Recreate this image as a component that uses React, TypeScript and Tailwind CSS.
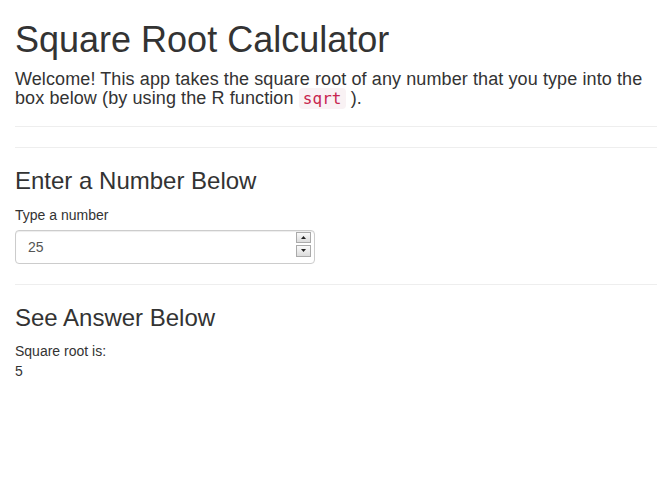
export default function App() {
  return (
    <div className="min-h-[480px] bg-white text-[#333] text-[14px] leading-[20px] font-['Liberation_Sans',Arial,sans-serif]">
      <div className="px-[15px]">
        <h1 className="pt-[20px] pb-[10px] text-[36px] leading-[39.6px] font-normal">Square Root Calculator</h1>
        <h4 className="pb-[17px] text-[18px] leading-[19.8px] font-normal tracking-[0.1px]">
          Welcome! This app takes the square root of any number that you type into the box below (by using the R function{' '}
          <code className="rounded-[4px] bg-[#f9f2f4] px-[4px] py-[1px] text-[16px] text-[#c7254e] font-['DejaVu_Sans_Mono',monospace]">sqrt</code>{' '}
          ).
        </h4>
        <hr className="border-t border-[#eee]" />
        <hr className="mt-[20px] border-t border-[#eee]" />

        <h3 className="pt-[20px] pb-[10px] text-[24px] leading-[26.4px] font-normal">Enter a Number Below</h3>
        <label className="mb-[5px] block font-normal">Type a number</label>
        <div className="relative w-[300px]">
          <input
            type="text"
            defaultValue="25"
            className="block h-[34px] w-full rounded-[4px] border border-[#ccc] px-[12px] py-[6px] text-[14px] text-[#555] shadow-[inset_0_1px_1px_rgba(0,0,0,0.075)] outline-none"
          />
          <div className="absolute right-[4px] top-[2px] flex flex-col gap-[2px]">
            <div className="flex h-[11px] w-[15px] items-center justify-center border border-[#aaa] bg-gradient-to-b from-[#fafafa] to-[#dcdcdc]">
              <svg width="5" height="3" viewBox="0 0 5 3"><path d="M2.5 0L5 3H0z" fill="#222" /></svg>
            </div>
            <div className="flex h-[12px] w-[15px] items-center justify-center border border-[#aaa] bg-gradient-to-b from-[#fafafa] to-[#dcdcdc]">
              <svg width="5" height="3" viewBox="0 0 5 3"><path d="M0 0H5L2.5 3z" fill="#222" /></svg>
            </div>
          </div>
        </div>
        <hr className="mt-[20px] border-t border-[#eee]" />

        <h3 className="pt-[20px] pb-[10px] text-[24px] leading-[26.4px] font-normal">See Answer Below</h3>
        <div>Square root is:</div>
        <div>5</div>
      </div>
    </div>
  );
}
